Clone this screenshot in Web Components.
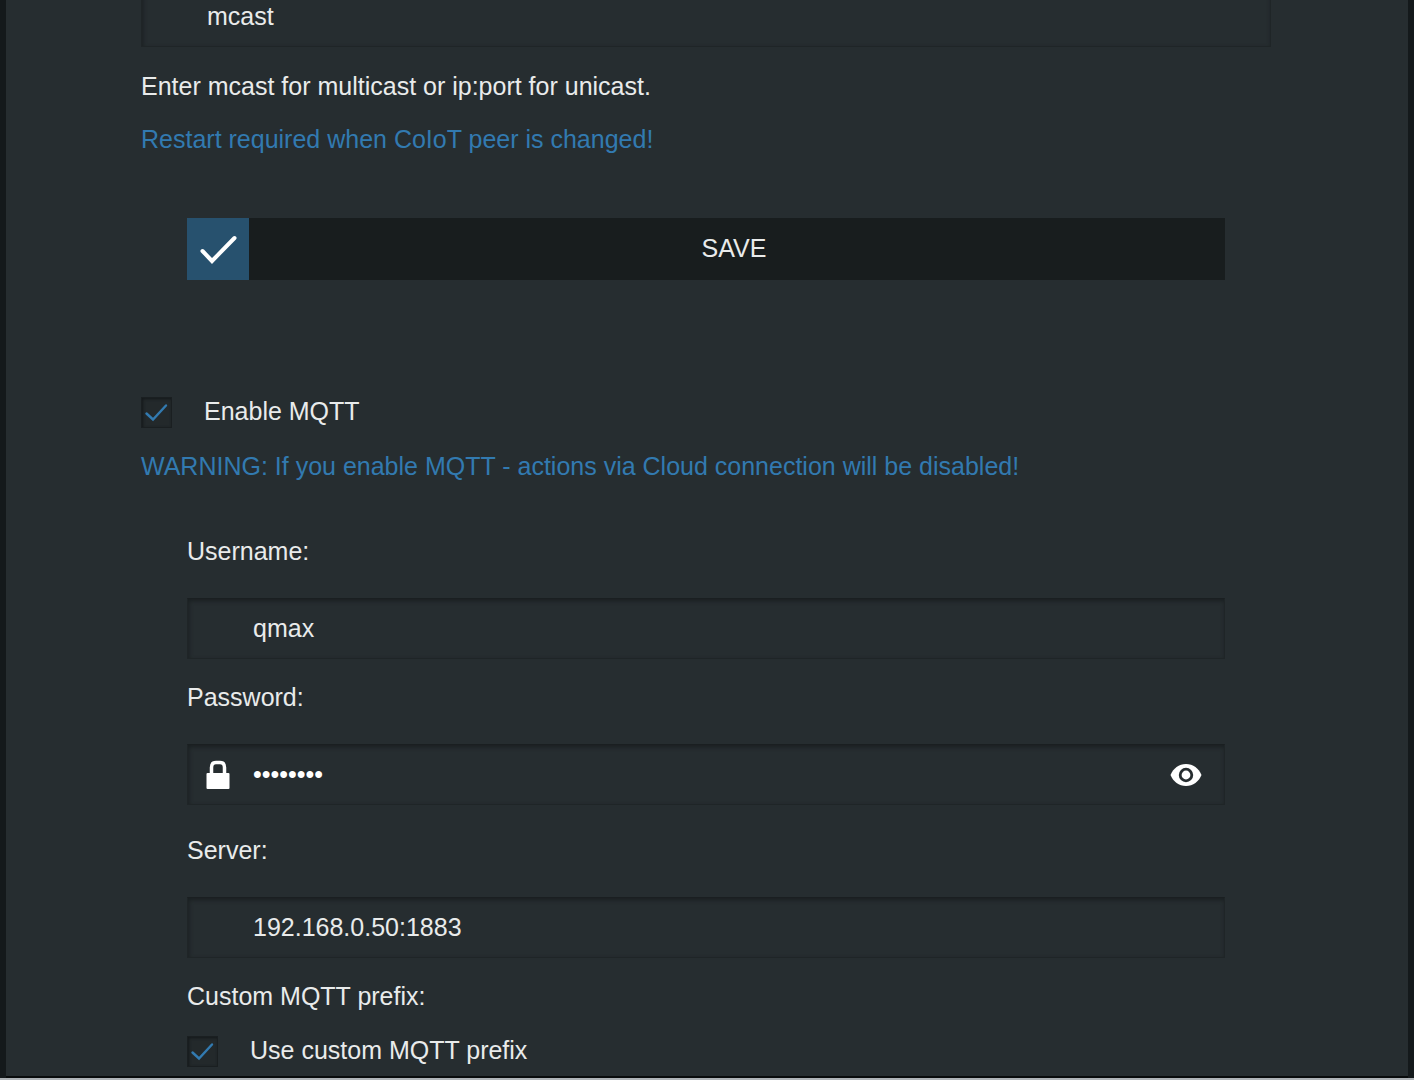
<!DOCTYPE html>
<html lang="en">
<head>
<meta charset="utf-8">
<meta name="viewport" content="width=device-width, initial-scale=1">
<title>MQTT settings</title>
<style>
    :root {
        --panel: #262d30;
        --edge: #14191b;
        --text: #e9ebeb;
        --accent: #327ab0;
    }
    body {
        margin: 0;
        background: var(--edge);
        color: var(--text);
        font: 25px/28px "Liberation Sans", Arial, sans-serif;
    }
</style>
</head>
<body>
<settings-page>
    <settings-section>
        <text-field class="first" label="CoIoT peer" value="mcast" hide-label></text-field>
        <text-note style="--gap: 25px">Enter mcast for multicast or ip:port for unicast.</text-note>
        <text-note style="--gap: 25px" type="warning">Restart required when CoIoT peer is changed!</text-note>
    </settings-section>
    <settings-section inset style="--gap: 65px">
        <save-button>SAVE</save-button>
    </settings-section>
    <settings-section style="--gap: 117px">
        <check-option>Enable MQTT</check-option>
        <text-note style="--gap: 24px" type="warning">WARNING: If you enable MQTT - actions via Cloud connection will be disabled!</text-note>
    </settings-section>
    <settings-section inset style="--gap: 57px">
        <text-field label="Username:" value="qmax"></text-field>
        <text-field style="--gap: 24px" label="Password:" value="mqttpass" type="password"></text-field>
        <text-field style="--gap: 31px" label="Server:" value="192.168.0.50:1883"></text-field>
        <text-note style="--gap: 24px">Custom MQTT prefix:</text-note>
        <check-option style="--gap: 26px">Use custom MQTT prefix</check-option>
    </settings-section>
</settings-page>

<script>
class SettingsPage extends HTMLElement {
    constructor() {
        super();
        this.attachShadow({ mode: 'open' });
    }

    connectedCallback() {
        this.shadowRoot.innerHTML = /*html*/`
        <style>
            :host {
                display: flex;
                flex-direction: column;
                box-sizing: border-box;
                height: 100vh;
                overflow: hidden;
                border-bottom: 2px solid #aeb3b7;
            }
            main {
                flex: 1;
                min-height: 0;
                box-sizing: border-box;
                margin: 0 6px;
                padding: 0 137px 0 135px;
                background: var(--panel);
                border-bottom: 2px solid #080b0c;
                overflow: hidden;
            }
        </style>
        <main><slot></slot></main>
        `;
    }
}

class SettingsSection extends HTMLElement {
    constructor() {
        super();
        this.attachShadow({ mode: 'open' });
    }

    connectedCallback() {
        this.shadowRoot.innerHTML = /*html*/`
        <style>
            :host { display: block; padding-top: var(--gap, 0); }
            :host([inset]) { padding-left: 46px; padding-right: 46px; }
            section { --gap: 0px; }
        </style>
        <section><slot></slot></section>
        `;
    }
}

class TextNote extends HTMLElement {
    constructor() {
        super();
        this.attachShadow({ mode: 'open' });
    }

    connectedCallback() {
        this.shadowRoot.innerHTML = /*html*/`
        <style>
            :host { display: block; margin-top: var(--gap, 0); }
            :host([type="warning"]) { color: var(--accent); }
            p { margin: 0; }
        </style>
        <p><slot></slot></p>
        `;
    }
}

class SaveButton extends HTMLElement {
    constructor() {
        super();
        this.attachShadow({ mode: 'open' });
    }

    connectedCallback() {
        this.shadowRoot.innerHTML = /*html*/`
        <style>
            :host { display: block; }
            button {
                display: flex;
                width: 100%;
                height: 62px;
                padding: 0;
                border: 0;
                background: #181d1e;
                color: inherit;
                font: inherit;
                cursor: pointer;
            }
            .icon { width: 62px; height: 62px; background: #27516e; }
            .text { flex: 1; align-self: center; padding: 0 6px 2px 0; }
        </style>
        <button type="button">
            <svg class="icon" viewBox="0 0 62 62" aria-hidden="true">
                <path d="M15.5 33 25 43 47.500 20" fill="none" stroke="#fff" stroke-width="4" stroke-linecap="round" stroke-linejoin="miter"/>
            </svg>
            <span class="text"><slot></slot></span>
        </button>
        `;
    }
}

class CheckOption extends HTMLElement {
    constructor() {
        super();
        this.attachShadow({ mode: 'open' });
    }

    connectedCallback() {
        this.shadowRoot.innerHTML = /*html*/`
        <style>
            :host { display: block; margin-top: var(--gap, 0); }
            label { display: flex; align-items: flex-start; gap: 32px; cursor: pointer; }
            .box { display: grid; width: 31px; height: 31px; }
            input, svg { grid-area: 1 / 1; width: 31px; height: 31px; }
            input {
                appearance: none;
                margin: 0;
                background: #23292b;
                border: 1px solid #1a1f21;
                box-shadow: inset 1px 1px 3px #14181a;
            }
            svg { visibility: hidden; pointer-events: none; }
            input:checked + svg { visibility: visible; }
        </style>
        <label>
            <span class="box">
                <input type="checkbox" checked>
                <svg viewBox="0 0 31 31" aria-hidden="true">
                    <path d="M5.500 16.5 12 22.5 25 8.500" fill="none" stroke="#327ab0" stroke-width="2.4" stroke-linecap="round"/>
                </svg>
            </span>
            <span><slot></slot></span>
        </label>
        `;
    }
}

class TextField extends HTMLElement {
    constructor() {
        super();
        this.attachShadow({ mode: 'open' });
    }

    connectedCallback() {
        const label = this.getAttribute('label');
        const value = this.getAttribute('value');
        const type = this.getAttribute('type') || 'text';
        const hidden = this.hasAttribute('hide-label');

        //The lock and the eye are only for passwords
        this.shadowRoot.innerHTML = /*html*/`
        <style>
            :host { display: block; margin-top: var(--gap, 0); }
            :host(.first) { margin-top: -14px; }
            label { display: block; margin-bottom: 33px; }
            .field { display: grid; align-items: center; grid-template-columns: 66px 1fr 78px; }
            input {
                grid-area: 1 / 1 / 2 / 4;
                box-sizing: border-box;
                width: 100%;
                height: 61px;
                padding: 0 78px 0 65px;
                border: 1px solid #1f2527;
                border-top-color: #1a1f21;
                background: var(--panel);
                box-shadow: inset 1px 2px 4px #1a1f21;
                color: inherit;
                font: inherit;
                outline: 0;
            }
            input[type="password"] { color: #fff; }
            .lock, button { z-index: 1; justify-self: center; }
            .lock { grid-area: 1 / 1; width: 24px; height: 30px; margin-right: 4px; }
            button {
                grid-area: 1 / 3;
                display: flex;
                padding: 0;
                border: 0;
                background: none;
                cursor: pointer;
            }
            button svg { width: 32px; height: 24px; }
        </style>
        ${hidden ? '' : `<label for="input">${label}</label>`}
        <div class="field">
            <input id="input" type="${type}" value="${value}" ${hidden ? `aria-label="${label}"` : ''}>
            ${type === 'password' ? /*html*/`
            <svg class="lock" viewBox="0 0 24 30" aria-hidden="true">
                <path d="M5.500 14V7.500Q5.500 2.500 10 2.500H14Q18.500 2.500 18.500 7.500V14" fill="none" stroke="#fff" stroke-width="3.500"/>
                <rect x=".5" y="13" width="23" height="16" rx="1" fill="#fff"/>
            </svg>
            <button type="button" aria-label="Show password">
                <svg viewBox="0 0 32 24" aria-hidden="true">
                    <path d="M.5 12C3 5.500 9 1 16 1S29 5.500 31.500 12C29 18.500 23 23 16 23S3 18.500.5 12Z" fill="#fff"/>
                    <circle cx="16" cy="12" r="5.800" fill="#fff" stroke="#262d30" stroke-width="2.800"/>
                </svg>
            </button>` : ''}
        </div>
        `;
        const button = this.shadowRoot.querySelector('button');
        button && button.addEventListener('click', () => {
            const input = this.shadowRoot.querySelector('input');
            input.type = input.type === 'password' ? 'text' : 'password';
        });
    }
}

customElements.define('settings-page', SettingsPage);
customElements.define('settings-section', SettingsSection);
customElements.define('text-note', TextNote);
customElements.define('save-button', SaveButton);
customElements.define('check-option', CheckOption);
customElements.define('text-field', TextField);
</script>
</body>
</html>
